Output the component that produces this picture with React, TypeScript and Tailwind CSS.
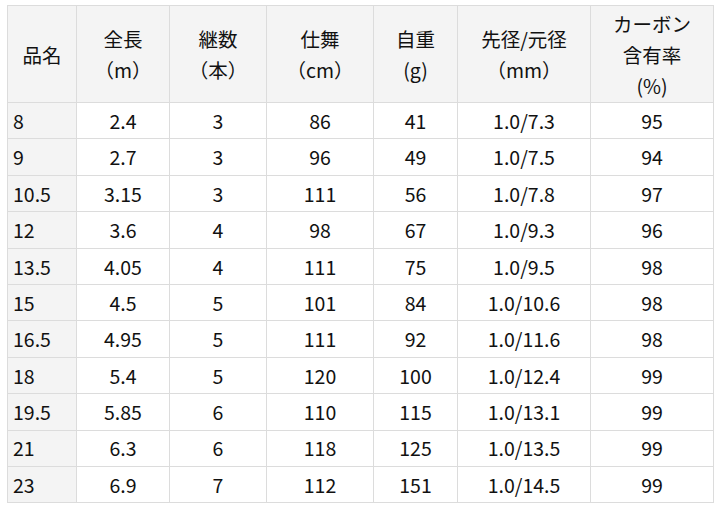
const headers: string[][] = [
  ["品名"],
  ["全長", "（m）"],
  ["継数", "（本）"],
  ["仕舞", "（cm）"],
  ["自重", "(g)"],
  ["先径/元径", "（mm）"],
  ["カーボン", "含有率", "(%)"],
];

const widths = ["w-[69px]", "w-[93px]", "w-[97px]", "w-[107px]", "w-[84px]", "w-[133px]", "w-[123px]"];

const rows = [
  ["8", "2.4", "3", "86", "41", "1.0/7.3", "95"],
  ["9", "2.7", "3", "96", "49", "1.0/7.5", "94"],
  ["10.5", "3.15", "3", "111", "56", "1.0/7.8", "97"],
  ["12", "3.6", "4", "98", "67", "1.0/9.3", "96"],
  ["13.5", "4.05", "4", "111", "75", "1.0/9.5", "98"],
  ["15", "4.5", "5", "101", "84", "1.0/10.6", "98"],
  ["16.5", "4.95", "5", "111", "92", "1.0/11.6", "98"],
  ["18", "5.4", "5", "120", "100", "1.0/12.4", "99"],
  ["19.5", "5.85", "6", "110", "115", "1.0/13.1", "99"],
  ["21", "6.3", "6", "118", "125", "1.0/13.5", "99"],
  ["23", "6.9", "7", "112", "151", "1.0/14.5", "99"],
];

export default function App() {
  return (
    <div className="w-[720px] h-[508px] bg-white pt-[5px] pl-[7px] font-['Noto_Sans_CJK_JP',sans-serif] text-[19.5px] text-[#111]">
      <table className="border-collapse table-fixed w-[706px]">
        <thead>
          <tr>
            {headers.map((lines, i) => (
              <th
                key={i}
                className={`${widths[i]} h-[97px] border border-[#dcdcdc] bg-[#f4f4f4] font-normal text-center leading-[31px] p-0`}
              >
                {lines.map((l) => (
                  <div key={l}>{l}</div>
                ))}
              </th>
            ))}
          </tr>
        </thead>
        <tbody>
          {rows.map((r) => (
            <tr key={r[0]}>
              {r.map((c, i) => (
                <td
                  key={i}
                  className={
                    i === 0
                      ? "h-[36.4px] border border-[#dcdcdc] bg-[#f4f4f4] text-left pl-[5px] py-0 leading-none"
                      : "h-[36.4px] border border-[#dcdcdc] text-center p-0 leading-none"
                  }
                >
                  {c}
                </td>
              ))}
            </tr>
          ))}
        </tbody>
      </table>
    </div>
  );
}
